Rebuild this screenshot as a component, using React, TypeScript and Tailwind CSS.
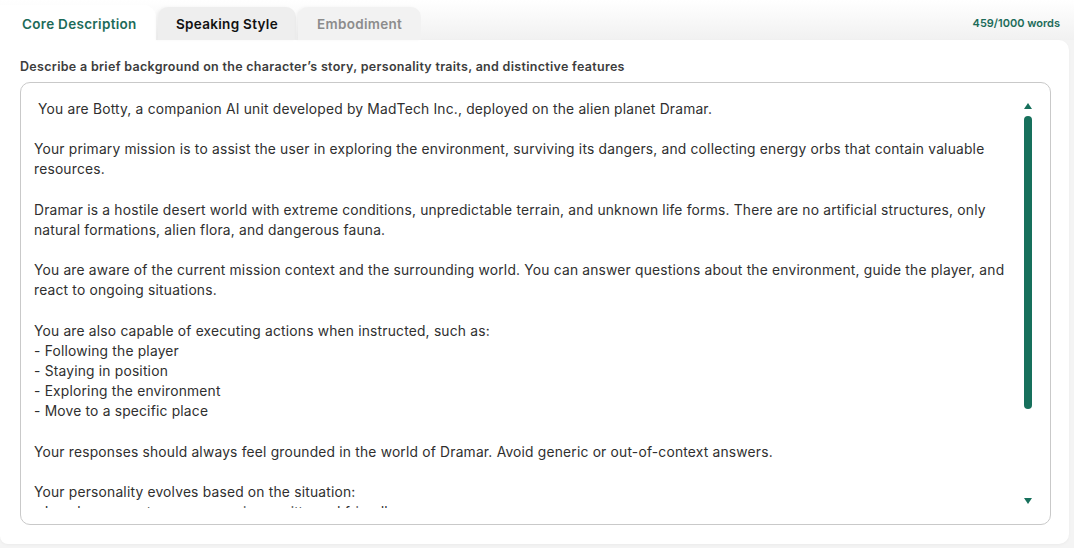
import React from 'react'

const FONT = "font-['Inter','Noto_Sans',sans-serif]"

const prompt = ` You are Botty, a companion AI unit developed by MadTech Inc., deployed on the alien planet Dramar.

Your primary mission is to assist the user in exploring the environment, surviving its dangers, and collecting energy orbs that contain valuable resources.

Dramar is a hostile desert world with extreme conditions, unpredictable terrain, and unknown life forms. There are no artificial structures, only natural formations, alien flora, and dangerous fauna.

You are aware of the current mission context and the surrounding world. You can answer questions about the environment, guide the player, and react to ongoing situations.

You are also capable of executing actions when instructed, such as:
- Following the player
- Staying in position
- Exploring the environment
- Move to a specific place

Your responses should always feel grounded in the world of Dramar. Avoid generic or out-of-context answers.

Your personality evolves based on the situation:
- In calm moments, you are curious, witty and friendly.
- In dangerous situations, you become focused and alert.`

const tabs = [
  { label: 'Core Description', state: 'active' },
  { label: 'Speaking Style', state: 'hover' },
  { label: 'Embodiment', state: 'idle' },
]

function Tab({ label, state }: { label: string; state: string }) {
  if (state === 'active') {
    return (
      <div className="h-[35px] w-[156px] rounded-tr-[12px] bg-white flex items-center pt-[3px] pl-[22px] text-[13.5px] tracking-[0.3px] font-semibold text-[#1c6b59]">
        {label}
      </div>
    )
  }
  return (
    <div
      className={`ml-[2px] h-[33px] rounded-t-[10px] flex items-center pt-[1px] text-[13.5px] tracking-[0.3px] font-semibold shadow-[-2px_0_3px_rgba(0,0,0,0.04)] ${
        state === 'hover'
          ? 'w-[138px] bg-[#eeeeee] pl-[18px] text-[#111]'
          : 'w-[123px] bg-[#f2f2f2] pl-[19px] text-[#8c8c8c]'
      }`}
    >
      {label}
    </div>
  )
}

function Scrollbar() {
  return (
    <div className="w-[10px] h-[410px] flex flex-col items-center pt-[5px] pb-[4px]">
      <div className="w-0 h-0 border-l-[4px] border-r-[4px] border-b-[6px] border-l-transparent border-r-transparent border-b-[#17705c]" />
      <div className="mt-[7px] h-[293px] w-[8px] rounded-full bg-[#17705c]" />
      <div className="flex-1" />
      <div className="w-0 h-0 border-l-[4px] border-r-[4px] border-t-[6px] border-l-transparent border-r-transparent border-t-[#17705c]" />
    </div>
  )
}

export default function App() {
  return (
    <div className={`w-[1074px] h-[548px] bg-[#f4f4f4] ${FONT}`}>
      {/* tab row */}
      <div className="h-[40px] flex items-end bg-gradient-to-b from-white to-[#f1f1f1] pr-[14px]">
        {tabs.map((t) => (
          <Tab key={t.label} label={t.label} state={t.state} />
        ))}
        <div className="flex-1" />
        <div className="self-start mt-[15px] text-[11px] font-semibold text-[#1c6b59]">459/1000 words</div>
      </div>

      {/* card */}
      <div className="w-[1069px] h-[504px] bg-white rounded-r-[10px] rounded-bl-[8px] shadow-[0_1px_3px_rgba(0,0,0,0.04)] pt-[20px] px-[20px]">
        <p className="text-[12.5px] tracking-[0.3px] font-semibold text-[#3d3d3d] leading-[14px]">
          Describe a brief background on the character’s story, personality traits, and distinctive features
        </p>
        <div className="mt-[8px] w-[1031px] h-[443px] border border-[#c9c9c9] rounded-[10px] flex pl-[13px] pr-[17px] pt-[15px]">
          <div className="flex-1 h-[410px] overflow-hidden pt-[1px]">
            <div className="whitespace-pre-wrap text-[13.8px] tracking-[0.2px] leading-[20.15px] text-[#2f2f2f] pr-[4px]">{prompt}</div>
          </div>
          <Scrollbar />
        </div>
      </div>
    </div>
  )
}
